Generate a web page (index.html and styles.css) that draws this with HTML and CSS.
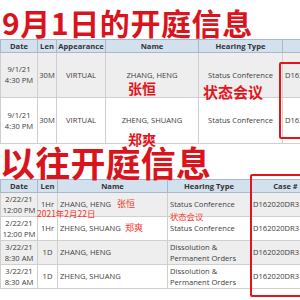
FILE: index.html
```html
<!DOCTYPE html>
<html lang="zh">
<head>
<meta charset="utf-8">
<link rel="stylesheet" href="styles.css">
</head>
<body>
<div class="page">
  <h1 class="title title-today">9月1日的开庭信息</h1>
  <table class="grid grid-today">
    <colgroup>
      <col class="c-date"><col class="c-len"><col class="c-app"><col class="c-name"><col class="c-type"><col class="c-case">
    </colgroup>
    <thead>
      <tr><th>Date</th><th>Len</th><th>Appearance</th><th>Name</th><th>Hearing Type</th><th></th></tr>
    </thead>
    <tbody>
      <tr class="odd r1"><td>9/1/21<br>4:30 PM</td><td>30M</td><td>VIRTUAL</td><td>ZHANG, HENG</td><td>Status Conference</td><td class="left">D162020DR3</td></tr>
      <tr class="even r2"><td>9/1/21<br>4:30 PM</td><td>30M</td><td>VIRTUAL</td><td>ZHENG, SHUANG</td><td>Status Conference</td><td class="left">D162020DR3</td></tr>
    </tbody>
  </table>
  <h1 class="title title-past">以往开庭信息</h1>
  <table class="grid grid-past">
    <colgroup>
      <col class="p-date"><col class="p-len"><col class="p-name"><col class="p-type"><col class="p-case">
    </colgroup>
    <thead>
      <tr><th>Date</th><th>Len</th><th>Name</th><th>Hearing Type</th><th>Case #</th></tr>
    </thead>
    <tbody>
      <tr class="odd"><td>2/22/21<br>12:00 PM</td><td>1Hr</td><td class="left">ZHANG, HENG</td><td class="left">Status Conference</td><td class="left">D162020DR3</td></tr>
      <tr class="even"><td>2/22/21<br>12:00 PM</td><td>1Hr</td><td class="left">ZHENG, SHUANG</td><td class="left">Status Conference</td><td class="left">D162020DR3</td></tr>
      <tr class="odd"><td>3/22/21<br>8:30 AM</td><td>1D</td><td class="left">ZHANG, HENG</td><td class="left">Dissolution &amp;<br>Permanent Orders</td><td class="left">D162020DR3</td></tr>
      <tr class="even"><td>3/22/21<br>8:30 AM</td><td>1D</td><td class="left">ZHENG, SHUANG</td><td class="left">Dissolution &amp;<br>Permanent Orders</td><td class="left">D162020DR3</td></tr>
    </tbody>
  </table>

  <span class="note big n-zhang">张恒</span>
  <span class="note big n-zheng">郑爽</span>
  <span class="note big n-status">状态会议</span>
  <div class="box box-today"></div>

  <span class="note small n2-zhang">张恒</span>
  <span class="note small n2-zheng">郑爽</span>
  <span class="note small n2-date">2021年2月22日</span>
  <span class="note small n2-status">状态会议</span>
  <div class="box box-past"></div>
</div>
</body>
</html>
```
FILE: styles.css
```css
html, body {
  margin: 0;
  padding: 0;
  background: #ffffff;
}
.page {
  position: relative;
  width: 300px;
  height: 300px;
  overflow: hidden;
  font-family: "Open Sans", "Noto Sans", sans-serif;
}
.title {
  margin: 0;
  color: #d9141c;
  font-family: "Noto Sans CJK SC", "Noto Sans", sans-serif;
  font-weight: 700;
  white-space: nowrap;
}
.title-today {
  height: 39px;
  font-size: 30px;
  line-height: 45px;
  padding-left: 2px;
  letter-spacing: 0.6px;
}
.title-past {
  height: 35px;
  font-size: 35px;
  line-height: 36px;
  padding-left: 0;
  letter-spacing: 0.2px;
}
.grid {
  border-collapse: collapse;
  table-layout: fixed;
  font-size: 7.6px;
  color: #404040;
}
.grid-today { width: 342px; }
.grid-past { width: 320px; }
.grid th {
  background: #d3e1ef;
  border: 1px solid #a8b8c8;
  height: 12px;
  padding: 0;
  font-weight: 700;
  color: #333;
  font-size: 7.6px;
  line-height: 11px;
}
.grid td {
  border: 1px solid #cfcfcf;
  padding: 0;
  text-align: center;
  vertical-align: middle;
  line-height: 11px;
  white-space: nowrap;
  overflow: hidden;
}
.grid td.left {
  text-align: left;
  padding-left: 2px;
}
.odd td { background: #eeeeee; }
.even td { background: #ffffff; }
.grid-today .r1 td { height: 44px; }
.grid-today .r2 td { height: 45px; }
.grid-past td { height: 23px; }
.c-date { width: 37px; }
.c-len { width: 19px; }
.c-app { width: 49px; }
.c-name { width: 93px; }
.c-type { width: 84px; }
.c-case { width: 60px; }
.p-date { width: 37px; }
.p-len { width: 20px; }
.p-name { width: 110px; }
.p-type { width: 83px; }
.p-case { width: 70px; }

.note {
  position: absolute;
  color: #e3141c;
  font-family: "Noto Sans CJK SC", "Noto Sans", sans-serif;
  white-space: nowrap;
  line-height: 1;
}
.note.big { font-weight: 700; }
.n-zhang { left: 128px; top: 81px; font-size: 14px; }
.n-zheng { left: 128px; top: 132px; font-size: 14px; }
.n-status { left: 203px; top: 84px; font-size: 15px; }
.note.small { color: #f2362c; font-weight: 400; }
.n2-zhang { left: 117px; top: 199px; font-size: 9px; }
.n2-zheng { left: 125px; top: 223px; font-size: 9px; font-weight: 700; }
.n2-date { left: 37px; top: 209px; font-size: 8.5px; }
.n2-status { left: 170px; top: 212px; font-size: 8.3px; }

.box {
  position: absolute;
  border: 2px solid #e3141c;
  border-radius: 2px;
}
.box-today { left: 279px; top: 62px; width: 40px; height: 73px; }
.box-past { left: 250px; top: 174px; width: 70px; height: 119px; border-width: 2.5px; }
```
